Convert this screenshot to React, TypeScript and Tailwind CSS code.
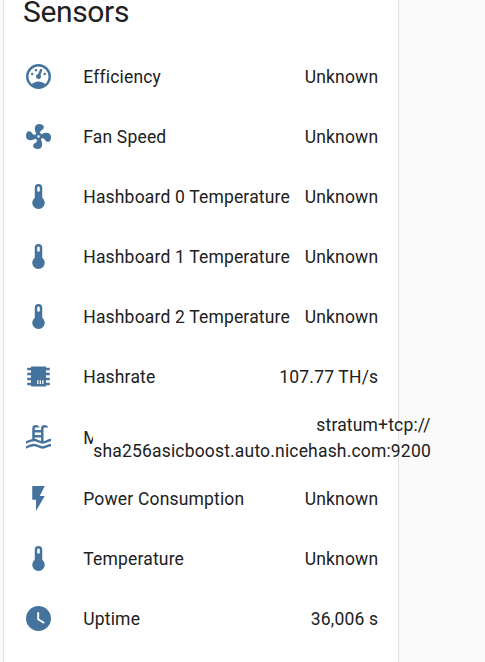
const icons = {
  gauge:
    "M12,2A10,10 0 0,0 2,12A10,10 0 0,0 12,22A10,10 0 0,0 22,12A10,10 0 0,0 12,2M12,4A8,8 0 0,1 20,12C20,14.4 19,16.5 17.3,18C15.9,16.7 14,16 12,16C10,16 8.2,16.7 6.7,18C5,16.5 4,14.4 4,12A8,8 0 0,1 12,4M14,5.89C13.62,5.9 13.26,6.15 13.1,6.54L11.81,9.77L11.71,10C11,10.13 10.41,10.6 10.14,11.26C9.73,12.29 10.23,13.45 11.26,13.86C12.29,14.27 13.45,13.77 13.86,12.74C14.12,12.08 14,11.32 13.57,10.76L13.67,10.5L14.96,7.29L14.97,7.26C15.17,6.75 14.92,6.17 14.41,5.96C14.28,5.91 14.15,5.89 14,5.89M10,6A1,1 0 0,0 9,7A1,1 0 0,0 10,8A1,1 0 0,0 11,7A1,1 0 0,0 10,6M7,9A1,1 0 0,0 6,10A1,1 0 0,0 7,11A1,1 0 0,0 8,10A1,1 0 0,0 7,9M17,9A1,1 0 0,0 16,10A1,1 0 0,0 17,11A1,1 0 0,0 18,10A1,1 0 0,0 17,9Z",
  fan:
    "M12,11A1,1 0 0,0 11,12A1,1 0 0,0 12,13A1,1 0 0,0 13,12A1,1 0 0,0 12,11M12.5,2C17,2 17.11,5.57 14.75,6.75C13.76,7.24 13.32,8.29 13.13,9.22C13.61,9.42 14.03,9.73 14.35,10.13C18.05,8.13 22.03,8.92 22.03,12.5C22.03,17 18.46,17.1 17.28,14.73C16.78,13.74 15.72,13.3 14.79,13.11C14.59,13.59 14.28,14 13.88,14.34C15.87,18.03 15.08,22 11.5,22C7,22 6.91,18.42 9.27,17.24C10.25,16.75 10.69,15.71 10.89,14.79C10.4,14.59 9.97,14.27 9.65,13.87C5.96,15.85 2,15.07 2,11.5C2,7 5.56,6.89 6.74,9.26C7.24,10.25 8.29,10.68 9.22,10.87C9.41,10.39 9.73,9.97 10.14,9.65C8.15,5.96 8.94,2 12.5,2Z",
  thermometer:
    "M15 13V5A3 3 0 0 0 9 5V13A5 5 0 1 0 15 13M12 4A1 1 0 0 1 13 5V8H11V5A1 1 0 0 1 12 4Z",
  chip:
    "M6,4H18V5H21V7H18V9H21V11H18V13H21V15H18V17H21V19H18V20H6V19H3V17H6V15H3V13H6V11H3V9H6V7H3V5H6V4M11,15V18H12V15H11M13,15V18H14V15H13M15,15V18H16V15H15Z",
  pool:
    "M2,15C3.67,14.25 5.33,13.5 7,13.17V5A3,3 0 0,1 10,2C11.31,2 12.42,2.83 12.83,4H10A1,1 0 0,0 9,5V6H14V5A3,3 0 0,1 17,2C18.31,2 19.42,2.83 19.83,4H17A1,1 0 0,0 16,5V14.94C18,14.62 20,13 22,13V15C19.78,15 17.56,17 15.33,17C13.11,17 10.89,15 8.67,15C6.44,15 4.22,16 2,17V15M14,8H9V10H14V8M14,12H9V13C10.67,13.16 12.33,14.31 14,14.79V12M2,19C4.22,18 6.44,17 8.67,17C10.89,17 13.11,19 15.33,19C17.56,19 19.78,17 22,17V19C19.78,19 17.56,21 15.33,21C13.11,21 10.89,19 8.67,19C6.44,19 4.22,20 2,21V19Z",
  flash: "M7,2V13H10V22L17,10H13L17,2H7Z",
  clock:
    "M12,2A10,10 0 0,0 2,12A10,10 0 0,0 12,22A10,10 0 0,0 22,12A10,10 0 0,0 12,2M16.2,16.2L11,13V7H12.5V12.2L17,14.9L16.2,16.2Z",
};

type Sensor = { icon: keyof typeof icons; name: string; value: string };

const before: Sensor[] = [
  { icon: "gauge", name: "Efficiency", value: "Unknown" },
  { icon: "fan", name: "Fan Speed", value: "Unknown" },
  { icon: "thermometer", name: "Hashboard 0 Temperature", value: "Unknown" },
  { icon: "thermometer", name: "Hashboard 1 Temperature", value: "Unknown" },
  { icon: "thermometer", name: "Hashboard 2 Temperature", value: "Unknown" },
  { icon: "chip", name: "Hashrate", value: "107.77 TH/s" },
];

const after: Sensor[] = [
  { icon: "flash", name: "Power Consumption", value: "Unknown" },
  { icon: "thermometer", name: "Temperature", value: "Unknown" },
  { icon: "clock", name: "Uptime", value: "36,006 s" },
];

function Icon({ name }: { name: keyof typeof icons }) {
  return (
    <svg viewBox="-0.4 0.4 24 24" className="size-[30px] shrink-0 fill-[#44739e]">
      <path d={icons[name]} />
    </svg>
  );
}

function Row({ icon, name, value }: Sensor) {
  return (
    <li className="flex h-[50px] items-center">
      <Icon name={icon} />
      <span className="ml-[30.25px] flex-1 whitespace-nowrap">{name}</span>
      <span className="whitespace-nowrap">{value}</span>
    </li>
  );
}

export default function App() {
  return (
    <div className="h-[662px] w-[485px] overflow-hidden bg-[#fafafa] pl-[3px] font-['Roboto',sans-serif] text-[#212121]">
      <section className="h-full w-[396px] border-x border-[#e0e0e0] bg-white pr-[19.75px] pl-[19px]">
        <h1 className="h-[52px] text-[30px] leading-[24px] tracking-[-0.36px]">Sensors</h1>
        <ul className="flex flex-col gap-[10px] text-[17.5px] leading-[26px] tracking-[0.175px]">
          {before.map((s) => (
            <Row key={s.name} {...s} />
          ))}
          <li className="flex h-[52px] items-center">
            <Icon name="pool" />
            <span className="ml-[30.25px] w-[10px] shrink-0 overflow-hidden whitespace-nowrap">M</span>
            <span className="w-[337.5px] shrink-0 text-right whitespace-nowrap">
              stratum+tcp://
              <br />
              sha256asicboost.auto.nicehash.com:9200
            </span>
          </li>
          {after.map((s) => (
            <Row key={s.name} {...s} />
          ))}
        </ul>
      </section>
    </div>
  );
}
